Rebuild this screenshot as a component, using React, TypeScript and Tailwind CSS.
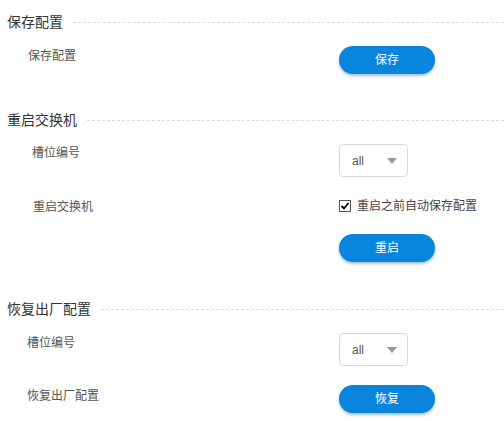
import React from 'react';

const font = { fontFamily: '"Liberation Sans", "Noto Sans CJK SC", sans-serif' };

function Heading({ title, mt }: { title: string; mt: string }) {
  return (
    <div className={`flex items-center pl-[7px] ${mt}`}>
      <span className="text-[14px] leading-[16px] text-[#333]">{title}</span>
      <div className="ml-[10px] flex-1 border-t border-dashed border-[#dcdcdc]" />
    </div>
  );
}

function BlueButton({ label }: { label: string }) {
  return (
    <button className="h-[28px] w-[96px] rounded-full bg-[#0a85de] text-[12px] leading-[28px] text-white shadow-[0_2px_3px_rgba(20,70,130,0.35)]">
      {label}
    </button>
  );
}

function Select() {
  return (
    <div className="flex h-[33px] w-[69px] items-center justify-between rounded-[4px] border border-[#dadada] bg-white pl-[12px] pr-[10px]">
      <span className="text-[12px] leading-[14px] text-[#555]">all</span>
      <svg width="10" height="6" viewBox="0 0 10 6">
        <path d="M0 0 H10 L5 6 Z" fill="#9a9a9a" />
      </svg>
    </div>
  );
}

function Row({
  label,
  labelPad,
  labelTop,
  mt,
  children,
}: {
  label: string;
  labelPad: string;
  labelTop: string;
  mt: string;
  children: React.ReactNode;
}) {
  return (
    <div className={`flex items-start ${mt}`}>
      <div className={`w-[339px] ${labelPad} ${labelTop} text-[12px] leading-[12px] text-[#555]`}>{label}</div>
      <div>{children}</div>
    </div>
  );
}

export default function App() {
  return (
    <div className="h-[421px] w-[504px] overflow-hidden bg-white" style={font}>
      <Heading title="保存配置" mt="pt-[14px]" />
      <Row label="保存配置" labelPad="pl-[28px]" labelTop="pt-[4px]" mt="mt-[16px]">
        <BlueButton label="保存" />
      </Row>

      <Heading title="重启交换机" mt="mt-[38px]" />
      <Row label="槽位编号" labelPad="pl-[32px]" labelTop="pt-[3px]" mt="mt-[16px]">
        <Select />
      </Row>
      <Row label="重启交换机" labelPad="pl-[33px]" labelTop="pt-[1px]" mt="mt-[23px]">
        <div className="flex items-center gap-[6px]">
          <svg width="12" height="12" viewBox="0 0 12 12">
            <rect x="0.5" y="0.5" width="11" height="11" fill="#fff" stroke="#555" />
            <path d="M2.5 6 L5 8.5 L9.5 3" fill="none" stroke="#000" strokeWidth="1.8" />
          </svg>
          <span className="text-[12px] leading-[12px] text-[#444]">重启之前自动保存配置</span>
        </div>
      </Row>
      <Row label="" labelPad="pl-[33px]" labelTop="pt-[0px]" mt="mt-[21px]">
        <BlueButton label="重启" />
      </Row>

      <Heading title="恢复出厂配置" mt="mt-[39px]" />
      <Row label="槽位编号" labelPad="pl-[27px]" labelTop="pt-[4px]" mt="mt-[16px]">
        <Select />
      </Row>
      <Row label="恢复出厂配置" labelPad="pl-[27px]" labelTop="pt-[5px]" mt="mt-[19px]">
        <BlueButton label="恢复" />
      </Row>
    </div>
  );
}
